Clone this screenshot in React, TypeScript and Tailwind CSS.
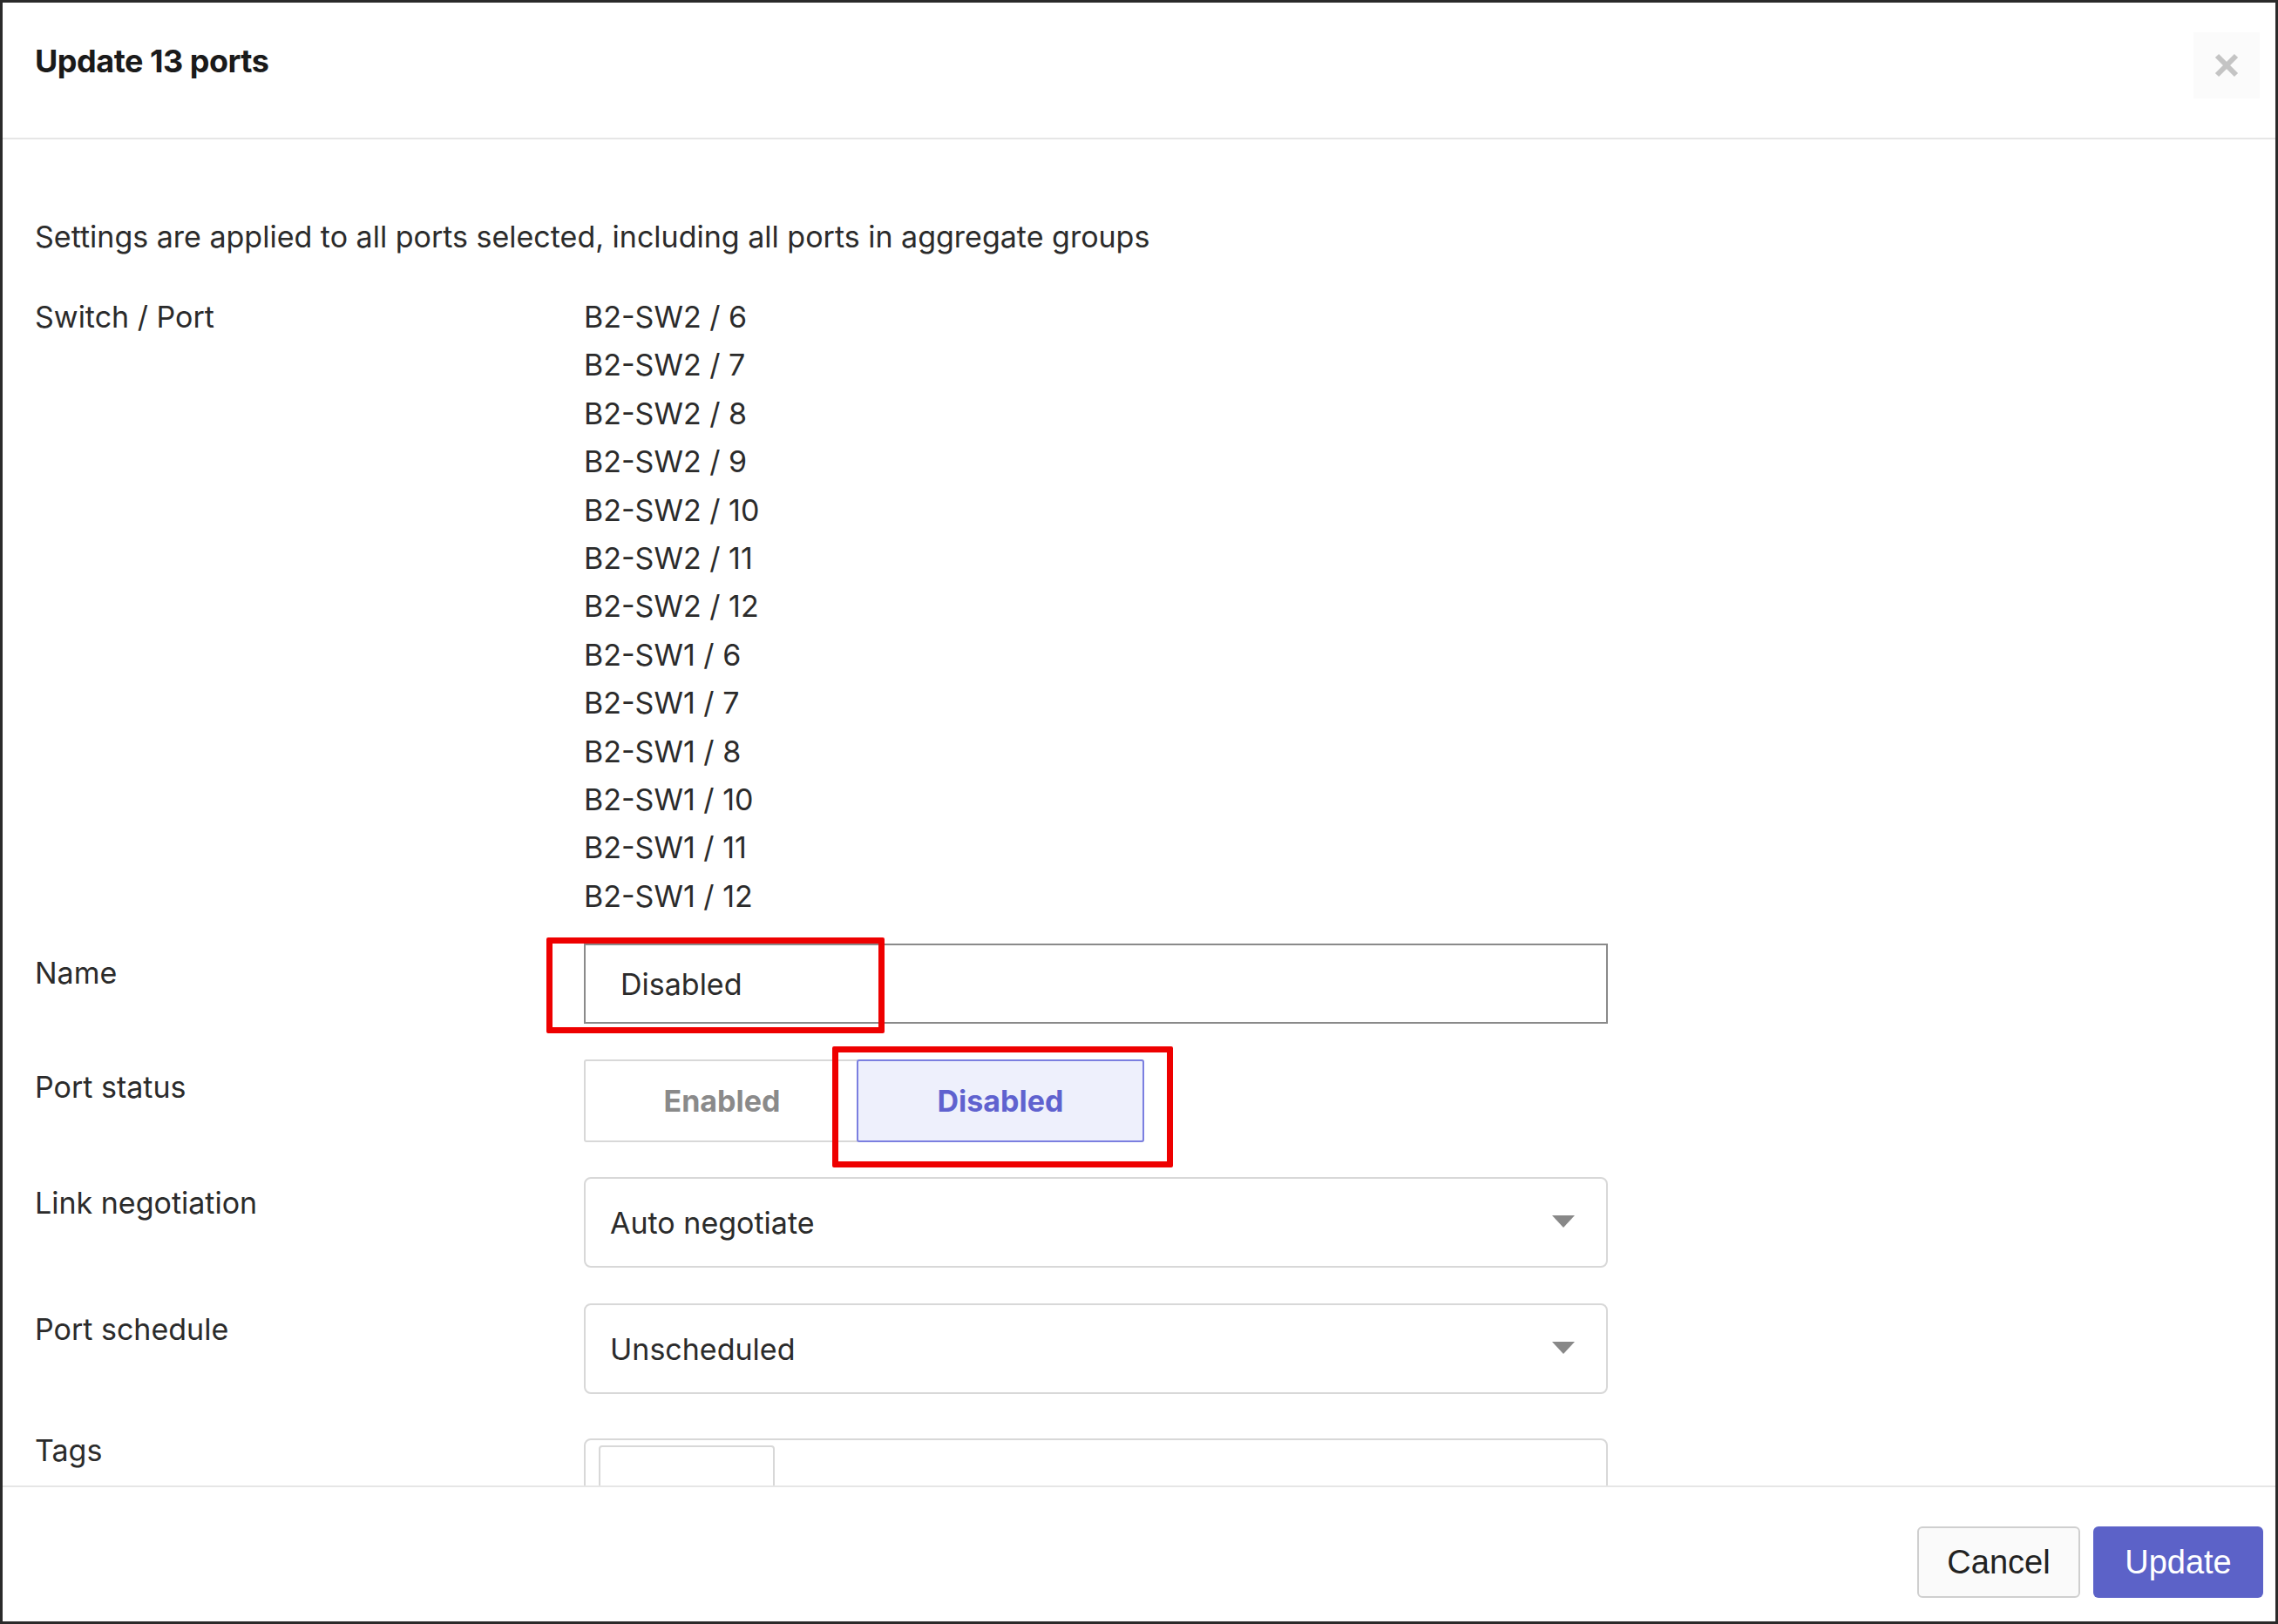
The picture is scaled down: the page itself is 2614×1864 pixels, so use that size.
export default function App() {
  const ports = ["B2-SW2 / 6","B2-SW2 / 7","B2-SW2 / 8","B2-SW2 / 9","B2-SW2 / 10","B2-SW2 / 11","B2-SW2 / 12","B2-SW1 / 6","B2-SW1 / 7","B2-SW1 / 8","B2-SW1 / 10","B2-SW1 / 11","B2-SW1 / 12"];
  const font = { fontFamily: "Inter, 'Noto Sans', sans-serif" };
  const Arrow = () => (
    <svg width="26" height="16" viewBox="0 0 26 16" className="absolute right-[36px] top-1/2 -translate-y-1/2"><path d="M0 0h26L13 14z" fill="#888" /></svg>
  );
  return (
    <div className="w-[2614px] h-[1864px] bg-white border-[3px] border-[#2a2a2a] flex flex-col text-[#2b2b2b] overflow-hidden" style={font}>
      <div className="h-[157px] shrink-0 border-b-2 border-[#e6e6e6] flex items-start justify-between pl-[37px] pr-[18px]">
        <div className="text-[36px] font-bold text-[#1a1a1a] mt-[40px] tracking-[-0.5px]">Update 13 ports</div>
        <div className="w-[76px] h-[76px] mt-[34px] bg-[#fbfbfb] flex items-center justify-center">
          <svg width="30" height="30" viewBox="0 0 30 30"><path d="M4 4L26 26M26 4L4 26" stroke="#c4c4c4" strokeWidth="6" /></svg>
        </div>
      </div>
      <div className="flex-1 overflow-hidden pl-[37px] pt-[88px] text-[34px]">
        <div className="leading-[48px]">Settings are applied to all ports selected, including all ports in aggregate groups</div>
        <div className="flex mt-[42px]">
          <div className="w-[630px] leading-[55px] -mt-[2px]">Switch / Port</div>
          <div className="flex flex-col leading-[55.4px] -mt-[2px]">
            {ports.map(p => <div key={p}>{p}</div>)}
          </div>
        </div>
        <div className="flex mt-[27px] items-start">
          <div className="w-[630px] pt-[8px]">Name</div>
          <div className="relative">
            <div className="w-[1175px] h-[92px] border-2 border-[#8a8a8a] flex items-center pl-[40px]">Disabled</div>
            <div className="absolute left-[-43px] top-[-7px] w-[388px] h-[110px] border-[7px] border-[#ee0000] rounded-[2px]" />
          </div>
        </div>
        <div className="flex mt-[41px] items-start">
          <div className="w-[630px] pt-[6px]">Port status</div>
          <div className="relative flex h-[95px] w-[643px] border-2 border-[#d8d8d8] rounded-[3px]">
            <div className="w-[313px] flex items-center justify-center font-bold text-[#8a8a8a]">Enabled</div>
            <div className="flex-1 flex items-center justify-center font-bold text-[#5f62cf] bg-[#eef0fc] border-2 border-[#7b7fe0] rounded-[3px] -m-[2px]">Disabled</div>
            <div className="absolute left-[283px] top-[-17px] w-[391px] h-[139px] border-[7px] border-[#ee0000] rounded-[2px]" />
          </div>
        </div>
        {[["Link negotiation","Auto negotiate"],["Port schedule","Unscheduled"]].map(([l,v],i)=>(
          <div key={l} className={`flex items-start ${i===0?"mt-[40px]":"mt-[41px]"}`}>
            <div className="w-[630px] pt-[4px]">{l}</div>
            <div className="relative w-[1175px] h-[104px] border-2 border-[#d8d8d8] rounded-[8px] flex items-center pl-[28px]">{v}<Arrow /></div>
          </div>
        ))}
        <div className="flex mt-[51px] items-start">
          <div className="w-[630px] -mt-[12px]">Tags</div>
          <div className="w-[1175px] h-[80px] border-2 border-[#d8d8d8] rounded-t-[8px] pl-[15px] pt-[6px]">
            <div className="w-[202px] h-[70px] border-2 border-[#d8d8d8] rounded-[4px]" />
          </div>
        </div>
      </div>
      <div className="h-[156px] shrink-0 border-t-2 border-[#e6e6e6] flex items-start justify-end gap-[15px] pr-[14px] pt-[45px]" style={{fontFamily:"'Liberation Sans', Arial, sans-serif"}}>
        <button className="w-[187px] h-[82px] border-2 border-[#cfcfcf] rounded-[6px] bg-[#fafafa] text-[38px] text-[#222]">Cancel</button>
        <button className="w-[195px] h-[82px] rounded-[6px] bg-[#5c62c8] text-[38px] text-white">Update</button>
      </div>
    </div>
  );
}
